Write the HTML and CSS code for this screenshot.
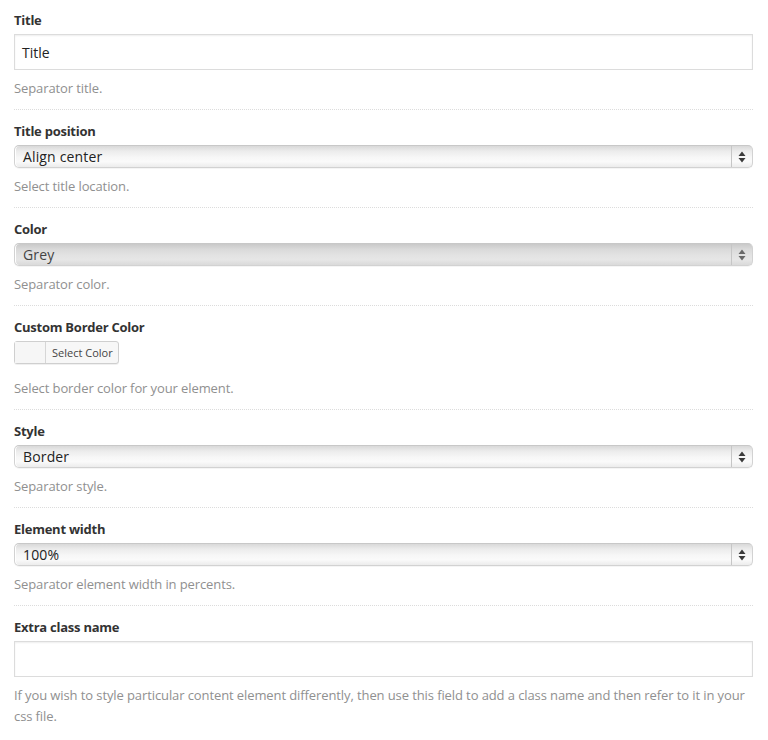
FILE: index.html
```html
<!DOCTYPE html>
<html>
<head>
<meta charset="utf-8">
<link rel="stylesheet" href="styles.css">
</head>
<body>
<div class="form">
  <div class="field first">
    <div class="label">Title</div>
    <div class="input"><span>Title</span></div>
    <div class="help">Separator title.</div>
  </div>
  <div class="field">
    <div class="label">Title position</div>
    <div class="select"><span class="value">Align center</span><span class="arrows"><svg width="8" height="12" viewBox="0 0 8 12"><path d="M4 0.5 L7.5 5 H0.5 Z M4 11.5 L7.5 7 H0.5 Z" fill="#3a3a3a"/></svg></span></div>
    <div class="help">Select title location.</div>
  </div>
  <div class="field">
    <div class="label">Color</div>
    <div class="select grey"><span class="value">Grey</span><span class="arrows"><svg width="8" height="12" viewBox="0 0 8 12"><path d="M4 0.5 L7.5 5 H0.5 Z M4 11.5 L7.5 7 H0.5 Z" fill="#6a6a6a"/></svg></span></div>
    <div class="help">Separator color.</div>
  </div>
  <div class="field">
    <div class="label">Custom Border Color</div>
    <div class="colorbtn"><span class="swatch"></span><span class="btntext">Select Color</span></div>
    <div class="help after-color">Select border color for your element.</div>
  </div>
  <div class="field">
    <div class="label">Style</div>
    <div class="select"><span class="value">Border</span><span class="arrows"><svg width="8" height="12" viewBox="0 0 8 12"><path d="M4 0.5 L7.5 5 H0.5 Z M4 11.5 L7.5 7 H0.5 Z" fill="#3a3a3a"/></svg></span></div>
    <div class="help">Separator style.</div>
  </div>
  <div class="field">
    <div class="label">Element width</div>
    <div class="select"><span class="value">100%</span><span class="arrows"><svg width="8" height="12" viewBox="0 0 8 12"><path d="M4 0.5 L7.5 5 H0.5 Z M4 11.5 L7.5 7 H0.5 Z" fill="#3a3a3a"/></svg></span></div>
    <div class="help">Separator element width in percents.</div>
  </div>
  <div class="field last">
    <div class="label">Extra class name</div>
    <div class="input"><span></span></div>
    <div class="help">If you wish to style particular content element differently, then use this field to add a class name and then refer to it in your css file.</div>
  </div>
</div>
</body>
</html>
```

FILE: styles.css
```css
html, body {
  margin: 0;
  padding: 0;
  background: #fff;
}
body {
  font-family: "Open Sans", "Liberation Sans", sans-serif;
  color: #333;
}
.form {
  padding: 0 15px 0 14px;
}
.field {
  padding: 12px 0 10px;
  border-bottom: 1px dotted #dcdcdc;
}
.field.first {
  padding-top: 11px;
}
.field.last {
  border-bottom: none;
}
.label {
  font-size: 13px;
  font-weight: 700;
  line-height: 18px;
  letter-spacing: -0.25px;
  color: #333;
  margin-bottom: 5px;
}
.input {
  height: 36px;
  box-sizing: border-box;
  border: 1px solid #dcdcdc;
  box-shadow: inset 0 1px 2px rgba(0,0,0,0.07);
  background: #fff;
  display: flex;
  align-items: center;
  padding: 0 7px;
  font-size: 14px;
  color: #222;
}
.select {
  height: 23px;
  box-sizing: border-box;
  display: flex;
  align-items: stretch;
  border: 1px solid #d2d2d2;
  border-top-color: #c8c8c8;
  border-radius: 5px;
  background: linear-gradient(#d9d9d9 0%, #ececec 25%, #f7f7f7 55%, #fafafa 75%, #ececec 100%);
  box-shadow: inset 1px 0 0 #fff, 0 1px 0 rgba(0,0,0,0.04);
  font-size: 14px;
  color: #222;
}
.select.grey {
  background: linear-gradient(#c9c9c9 0%, #dadada 25%, #e3e3e3 55%, #e6e6e6 75%, #dadada 100%);
  color: #444;
}
.select .value {
  flex: 1;
  display: flex;
  align-items: center;
  padding-left: 8px;
  line-height: 20px;
  letter-spacing: 0.15px;
}
.select .arrows {
  width: 20px;
  border-left: 1px solid #c6c6c6;
  display: flex;
  align-items: center;
  justify-content: center;
}
.select .arrows svg {
  display: block;
}
.help {
  margin-top: 8px;
  font-size: 13px;
  line-height: 21px;
  letter-spacing: -0.1px;
  color: #909090;
}
.help.after-color {
  margin-top: 14px;
}
.colorbtn {
  display: inline-flex;
  height: 23px;
  box-sizing: border-box;
  border: 1px solid #cfcfcf;
  border-radius: 3px;
  background: #f7f7f7;
  box-shadow: 0 1px 0 rgba(0,0,0,0.06);
  vertical-align: top;
}
.colorbtn .swatch {
  width: 30px;
  border-right: 1px solid #d6d6d6;
  background: #f6f6f6;
}
.colorbtn .btntext {
  display: flex;
  align-items: center;
  padding: 0 5px 0 6px;
  font-size: 11px;
  color: #444;
}
```
